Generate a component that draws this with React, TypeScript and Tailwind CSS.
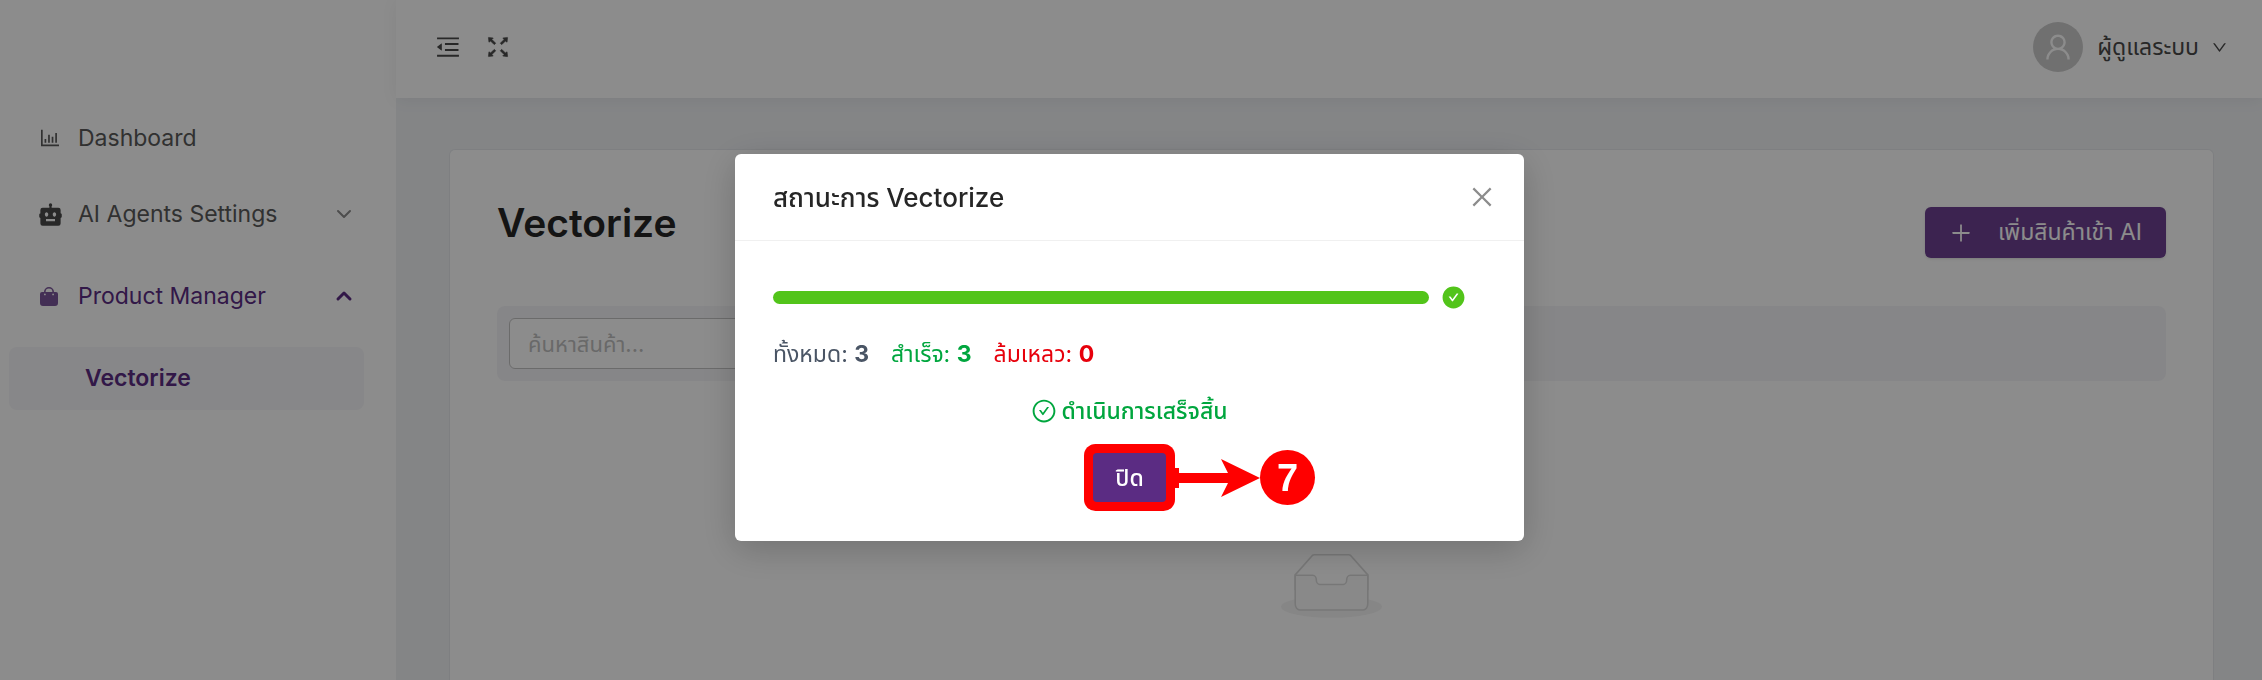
import {
  AiFillCheckCircle,
  AiOutlineBarChart,
  AiOutlineCheckCircle,
  AiOutlineClose,
  AiOutlineDown,
  AiOutlineFullscreen,
  AiOutlineMenuFold,
  AiOutlinePlus,
  AiOutlineUser,
} from "react-icons/ai";
import { BiSolidBot } from "react-icons/bi";
import { ChevronDown, ChevronUp } from "lucide-react";

const STATS = [
  { label: "ทั้งหมด:", value: 3, className: "text-[#4a5565]" },
  { label: "สำเร็จ:", value: 3, className: "text-[#00a63e]" },
  { label: "ล้มเหลว:", value: 0, className: "text-[#e7000b]" },
];

function BagIcon() {
  return (
    <svg className="w-[18px] h-[20px] opacity-80" viewBox="0 0 18 20" fill="currentColor">
      <path
        fillRule="evenodd"
        d="M4 6a5 5 0 0 1 10 0h2a2 2 0 0 1 2 2v9a3 3 0 0 1-3 3H3a3 3 0 0 1-3-3V8a2 2 0 0 1 2-2zm1.6 0h6.8a3.4 3.4 0 0 0-6.8 0zM4 8.400a.9.9 0 1 0 1.800 0a.9.9 0 1 0-1.800 0zm8.200 0a.9.9 0 1 0 1.800 0a.9.9 0 1 0-1.800 0z"
      />
    </svg>
  );
}

function Sidebar() {
  return (
    <aside className="w-[396px] shrink-0 bg-white pt-[107px] pl-[9px] pr-8 text-[23px] text-[#595959]">
      <nav>
        <a href="#dashboard" className="flex h-[62px] items-center pl-[29px]">
          <AiOutlineBarChart className="w-6 h-6" />
          <span className="ml-4">Dashboard</span>
        </a>
        <a href="#agents" className="mt-3.5 flex h-[62px] items-center pl-7 pr-2">
          <BiSolidBot className="w-[27px] h-[27px] text-[#4a4a4a]" />
          <span className="ml-3.5">AI Agents Settings</span>
          <ChevronDown className="ml-auto w-6 h-6 text-[#8c8c8c]" />
        </a>
        <a href="#products" className="mt-5 flex h-[62px] items-center pl-[31px] pr-2 text-[#5b2c83]">
          <BagIcon />
          <span className="ml-5">Product Manager</span>
          <ChevronUp className="ml-auto w-6 h-6" strokeWidth={3} />
        </a>
        <a
          href="#vectorize"
          className="mt-5 flex h-[63px] items-center rounded-lg bg-[#f6f6f9] pl-[76px] font-semibold text-[#5b2c83]"
        >
          Vectorize
        </a>
      </nav>
    </aside>
  );
}

function Header() {
  return (
    <header className="flex h-[98px] items-center bg-white pb-1 pl-[38px] pr-[34px] text-[#4a4a4a] shadow-[0_2px_16px_rgba(0,0,0,0.06)]">
      <button type="button" aria-label="Collapse menu">
        <AiOutlineMenuFold className="w-7 h-7" />
      </button>
      <button type="button" aria-label="Fullscreen" className="ml-[22px]">
        <AiOutlineFullscreen className="w-7 h-7" strokeWidth={20} />
      </button>
      <button type="button" className="ml-auto flex items-center text-[23px]">
        <span className="flex h-[50px] w-[50px] items-center justify-center rounded-full bg-[#cccccc] text-white">
          <AiOutlineUser className="w-8 h-8" />
        </span>
        <span className="ml-3.5">ผู้ดูแลระบบ</span>
        <AiOutlineDown className="ml-3 w-[17px] h-[17px]" />
      </button>
    </header>
  );
}

function EmptyBox() {
  return (
    <svg className="w-[101px] h-[65px]" viewBox="0 0 64 41">
      <g transform="translate(0 1)" fill="none" fillRule="evenodd">
        <ellipse fill="#f5f5f5" cx="32" cy="33" rx="32" ry="7" />
        <g fillRule="nonzero" stroke="#d9d9d9">
          <path d="M55 12.76L44.854 1.258C44.367.474 43.656 0 42.907 0H21.093c-.749 0-1.46.474-1.947 1.257L9 12.761V22h46v-9.24z" />
          <path
            d="M41.613 15.931c0-1.605.994-2.93 2.227-2.931H55v18.137C55 33.26 53.68 35 52.05 35h-40.1C10.32 35 9 33.259 9 31.137V13h11.16c1.233 0 2.227 1.323 2.227 2.928v.022c0 1.605 1.005 2.901 2.237 2.901h14.752c1.232 0 2.237-1.308 2.237-2.913v-.007z"
            fill="#fafafa"
          />
        </g>
      </g>
    </svg>
  );
}

function VectorizePage() {
  return (
    <main className="mt-[51px] ml-[53px] mr-12 flex-1 rounded-t-md border border-b-0 border-[#e6e8ec] bg-white px-[47px] pt-[49px]">
      <div className="flex items-start justify-between">
        <h1 className="text-[39px] leading-[48px] font-semibold text-[#262626]">Vectorize</h1>
        <button
          type="button"
          className="mt-2 flex h-[51px] items-center rounded-md bg-[#6e4192] px-6 text-[23px] text-white shadow-sm"
        >
          <AiOutlinePlus className="w-6 h-6" />
          <span className="ml-[25px]">เพิ่มสินค้าเข้า AI</span>
        </button>
      </div>

      <div className="mt-12 flex rounded-lg bg-[#f5f5f8] px-3 py-3">
        <input
          type="text"
          aria-label="ค้นหาสินค้า"
          placeholder="ค้นหาสินค้า..."
          className="h-[51px] w-[500px] rounded-md border border-[#c4c4c4] bg-white px-[18px] text-[22px] placeholder:text-[#bfbfbf]"
        />
      </div>

      <div className="mt-[172px] flex justify-center">
        <EmptyBox />
      </div>
    </main>
  );
}

// Numbered pointer that marks the close button
function StepMarker() {
  return (
    <div className="absolute -top-[9px] left-full ml-2 flex h-[67px] items-center">
      <svg className="h-[38px] w-[86px]" viewBox="0 0 86 38" fill="#ff0000">
        <path d="M0 9h5v5h49L47 0l39 19-39 19 7-14H5v5H0z" />
      </svg>
      <span className="flex h-[55px] w-[55px] items-center justify-center rounded-full bg-[#ff0000] font-['Liberation_Sans',sans-serif] text-[38px] font-bold text-white">
        7
      </span>
    </div>
  );
}

function StatusModal() {
  return (
    <div className="fixed inset-0 flex items-start justify-center bg-black/45 pt-[154px] pr-[3px]">
      <div
        role="dialog"
        aria-labelledby="status-title"
        className="w-[789px] rounded-md bg-white shadow-[0_8px_36px_rgba(0,0,0,0.2)]"
      >
        <div className="flex h-[87px] items-center justify-between border-b border-[#f0f0f0] pl-[38px] pr-7">
          <h2 id="status-title" className="text-[26px] font-medium text-[#262626]">
            สถานะการ Vectorize
          </h2>
          <button type="button" aria-label="Close" className="text-[#8c8c8c]">
            <AiOutlineClose className="w-7 h-7" />
          </button>
        </div>

        <div className="px-[38px] pt-[43px] pb-[39px] text-[23px] leading-[34px]">
          <div className="flex h-[26px] items-center pr-5">
            <div className="h-[13px] flex-1 rounded-full bg-[#52c41a]" />
            <AiFillCheckCircle className="ml-3 w-[25px] h-[25px] text-[#52c41a]" />
          </div>

          <div className="mt-[27px] flex gap-[22px]">
            {STATS.map((stat) => (
              <span key={stat.label} className={stat.className}>
                {stat.label} <b>{stat.value}</b>
              </span>
            ))}
          </div>

          <div className="mt-[23px] flex items-center justify-center gap-1 text-[#00a63e]">
            <AiOutlineCheckCircle className="w-[26px] h-[26px]" />
            <span className="font-medium">ดำเนินการเสร็จสิ้น</span>
          </div>

          <div className="mt-[25px] flex justify-center">
            <div className="relative">
              <button
                type="button"
                className="block h-[49px] w-[73px] rounded-sm bg-[#5b2c83] font-medium text-white shadow-[0_0_0_9px_#ff0000]"
              >
                ปิด
              </button>
              <StepMarker />
            </div>
          </div>
        </div>
      </div>
    </div>
  );
}

export default function App() {
  return (
    <div className="flex h-screen overflow-hidden bg-[#f0f2f5] font-['Inter','Noto_Sans_Thai',sans-serif]">
      <Sidebar />
      <div className="flex min-w-0 flex-1 flex-col">
        <Header />
        <VectorizePage />
      </div>
      <StatusModal />
    </div>
  );
}
